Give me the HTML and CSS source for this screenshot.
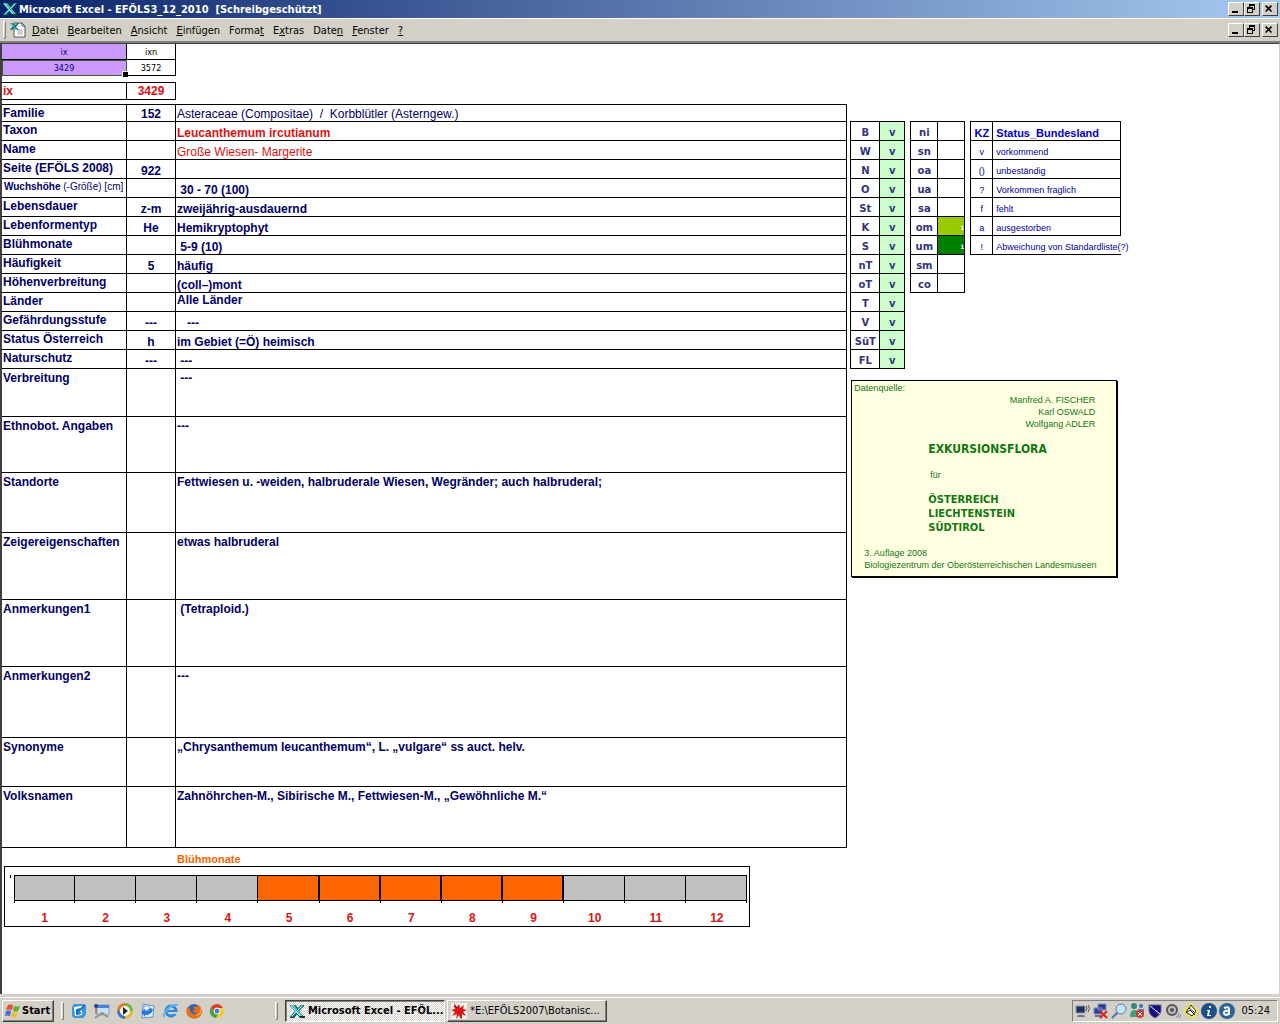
FILE: index.html
```html
<!doctype html>
<html lang="de">

<head>
    <meta charset="utf-8">
    <title>Microsoft Excel - EFÖLS3_12_2010</title>
    <link rel="stylesheet" href="styles.css">
</head>

<body>
    <!-- shared icons -->
    <svg class="defs" width="0" height="0">
        <symbol id="excel" viewBox="0 0 16 16">
            <path d="M1 2h5l3 3 3-3h3v1l-5 5 4 5h2v2h-5l-3-4-3 4H1v-1l5-6-5-5z" fill="#063b3f" />
            <path d="M1 2h4l9 11h-4z" fill="#4cc4c4" />
            <path d="M12 2h3L4 14H1z" fill="#1c9a9a" />
            <path d="M2 3l9 10M13 3L3 13" stroke="#b5f0ee" stroke-width="1" />
        </symbol>
        <symbol id="min" viewBox="0 0 12 10">
            <path d="M3 7h6v2H3z" />
        </symbol>
        <symbol id="restore" viewBox="0 0 12 10">
            <path d="M4 0h6v6H8V5h1V2H5v1H4zM2 3h6v6H2zM3 5v3h4V5z" fill-rule="evenodd" />
        </symbol>
        <symbol id="close" viewBox="0 0 14 12">
            <path d="M3 2l7 7M10 2L3 9" stroke="black" stroke-width="2" />
        </symbol>
    </svg>

    <header class="titlebar">
        <svg class="icon"><use href="#excel" /></svg>
        <h1>Microsoft Excel - EFÖLS3_12_2010&nbsp; [Schreibgeschützt]</h1>
        <div class="winbuttons">
            <button aria-label="Minimieren"><svg><use href="#min" /></svg></button>
            <button aria-label="Wiederherstellen"><svg><use href="#restore" /></svg></button>
            <button class="close" aria-label="Schließen"><svg><use href="#close" /></svg></button>
        </div>
    </header>

    <nav class="menubar">
        <span class="grip"></span>
        <svg class="icon" viewBox="0 0 16 16">
            <path d="M4 1h8l3 3v11H4z" fill="#fff" stroke="#555" />
            <path d="M12 1v3h3" fill="none" stroke="#555" />
            <path d="M7 8h6M7 10h6M7 12h6M9 7v6M11 7v6" stroke="#bbb" />
            <path d="M0 1h3l2 2 2-2h2L6 5l3 3H6L4 6 2 8H0l3-4z" fill="#087078" />
            <path d="M1 1l6 7" stroke="#5cd0d0" />
        </svg>
        <div class="menus">
            <button><u>D</u>atei</button>
            <button><u>B</u>earbeiten</button>
            <button><u>A</u>nsicht</button>
            <button><u>E</u>infügen</button>
            <button>Forma<u>t</u></button>
            <button>E<u>x</u>tras</button>
            <button>Date<u>n</u></button>
            <button><u>F</u>enster</button>
            <button><u>?</u></button>
        </div>
        <div class="winbuttons">
            <button aria-label="Mappe minimieren"><svg><use href="#min" /></svg></button>
            <button aria-label="Mappe wiederherstellen"><svg><use href="#restore" /></svg></button>
            <button class="close" aria-label="Mappe schließen"><svg><use href="#close" /></svg></button>
        </div>
    </nav>

    <main class="sheet">
        <section class="record">
            <table class="index">
                <tr>
                    <th class="violet">ix</th>
                    <th>ixn</th>
                </tr>
                <tr>
                    <td class="violet selected">3429</td>
                    <td>3572</td>
                </tr>
            </table>

            <table class="index current">
                <tr>
                    <th>ix</th>
                    <td>3429</td>
                </tr>
            </table>

            <table class="taxon">
                <colgroup>
                    <col class="col-label">
                    <col class="col-code">
                    <col>
                </colgroup>
                <tr class="first"><th>Familie</th><td>152</td><td class="light">Asteraceae (Compositae)&nbsp; /&nbsp; Korbblütler (Asterngew.)</td></tr>
                <tr><th>Taxon</th><td></td><td class="red">Leucanthemum ircutianum</td></tr>
                <tr><th>Name</th><td></td><td class="light red">Große Wiesen- Margerite</td></tr>
                <tr><th>Seite (EFÖLS 2008)</th><td>922</td><td></td></tr>
                <tr><th class="small"><b>Wuchshöhe</b> (-Größe) [cm]</th><td></td><td>&nbsp;30 - 70 (100)</td></tr>
                <tr><th>Lebensdauer</th><td>z-m</td><td>zweijährig-ausdauernd</td></tr>
                <tr><th>Lebenformentyp</th><td>He</td><td>Hemikryptophyt</td></tr>
                <tr><th>Blühmonate</th><td></td><td>&nbsp;5-9 (10)</td></tr>
                <tr><th>Häufigkeit</th><td>5</td><td>häufig</td></tr>
                <tr><th>Höhenverbreitung</th><td></td><td>(coll–)mont</td></tr>
                <tr><th>Länder</th><td></td><td class="top">Alle Länder</td></tr>
                <tr><th>Gefährdungsstufe</th><td>---</td><td>&nbsp;&nbsp; ---</td></tr>
                <tr><th>Status Österreich</th><td>h</td><td>im Gebiet (=Ö) heimisch</td></tr>
                <tr><th>Naturschutz</th><td>---</td><td>&nbsp;---</td></tr>
                <tr class="memo h48"><th>Verbreitung</th><td></td><td>&nbsp;---</td></tr>
                <tr class="memo h56"><th>Ethnobot. Angaben</th><td></td><td>---</td></tr>
                <tr class="memo h60"><th>Standorte</th><td></td><td>Fettwiesen u. -weiden, halbruderale Wiesen, Wegränder; auch halbruderal;</td></tr>
                <tr class="memo h67"><th>Zeigereigenschaften</th><td></td><td>etwas halbruderal</td></tr>
                <tr class="memo h67"><th>Anmerkungen1</th><td></td><td>&nbsp;(Tetraploid.)</td></tr>
                <tr class="memo h71"><th>Anmerkungen2</th><td></td><td>---</td></tr>
                <tr class="memo h49"><th>Synonyme</th><td></td><td>„Chrysanthemum leucanthemum“, L. „vulgare“ ss auct. helv.</td></tr>
                <tr class="memo h61"><th>Volksnamen</th><td></td><td>Zahnöhrchen-M., Sibirische M., Fettwiesen-M., „Gewöhnliche M.“</td></tr>
            </table>

            <h2>Blühmonate</h2>
            <div class="chart">
                <ol class="months">
                    <li>1</li>
                    <li>2</li>
                    <li>3</li>
                    <li>4</li>
                    <li class="bloom">5</li>
                    <li class="bloom">6</li>
                    <li class="bloom">7</li>
                    <li class="bloom">8</li>
                    <li class="bloom">9</li>
                    <li>10</li>
                    <li>11</li>
                    <li>12</li>
                </ol>
            </div>
        </section>

        <aside class="side">
            <div class="keys">
                <table class="key lands">
                    <tr><th>B</th><td>v</td></tr>
                    <tr><th>W</th><td>v</td></tr>
                    <tr><th>N</th><td>v</td></tr>
                    <tr><th>O</th><td>v</td></tr>
                    <tr><th>St</th><td>v</td></tr>
                    <tr><th>K</th><td>v</td></tr>
                    <tr><th>S</th><td>v</td></tr>
                    <tr><th>nT</th><td>v</td></tr>
                    <tr><th>oT</th><td>v</td></tr>
                    <tr><th>T</th><td>v</td></tr>
                    <tr><th>V</th><td>v</td></tr>
                    <tr><th>SüT</th><td>v</td></tr>
                    <tr><th>FL</th><td>v</td></tr>
                </table>

                <table class="key levels">
                    <tr><th>ni</th><td></td></tr>
                    <tr><th>sn</th><td></td></tr>
                    <tr><th>oa</th><td></td></tr>
                    <tr><th>ua</th><td></td></tr>
                    <tr><th>sa</th><td></td></tr>
                    <tr><th>om</th><td class="lime">1</td></tr>
                    <tr><th>um</th><td class="green">1</td></tr>
                    <tr><th>sm</th><td></td></tr>
                    <tr><th>co</th><td></td></tr>
                </table>

                <table class="key status">
                    <tr><th>KZ</th><th>Status_Bundesland</th></tr>
                    <tr><td>v</td><td>vorkommend</td></tr>
                    <tr><td>()</td><td>unbeständig</td></tr>
                    <tr><td>?</td><td>Vorkommen fraglich</td></tr>
                    <tr><td>f</td><td>fehlt</td></tr>
                    <tr><td>a</td><td>ausgestorben</td></tr>
                    <tr><td>!</td><td class="open">Abweichung von Standardliste(?)</td></tr>
                </table>
            </div>

            <div class="source">
                <p>Datenquelle:</p>
                <p class="authors">Manfred A. FISCHER<br>Karl OSWALD<br>Wolfgang ADLER</p>
                <p class="book">EXKURSIONSFLORA</p>
                <p class="for">für</p>
                <p class="regions">ÖSTERREICH<br>LIECHTENSTEIN<br>SÜDTIROL</p>
                <p class="edition">3. Auflage 2008<br>Biologiezentrum der Oberösterreichischen Landesmuseen</p>
            </div>
        </aside>
    </main>

    <footer class="taskbar">
        <button class="start">
            <svg class="icon" viewBox="0 0 16 16">
                <path d="M3 2q3-1 5 0L7 7Q4 6 1 7z" fill="#e8502a" />
                <path d="M9 3q3 1 6 0l-2 5q-2 1-5 0z" fill="#5cae2c" />
                <path d="M1 8q3-1 5 0l-1 5q-3-1-5 0z" fill="#3a6ed8" />
                <path d="M7 9q3 1 6 0l-2 5q-2 1-5 0z" fill="#f2bc22" />
            </svg>
            Start
        </button>
        <span class="grip"></span>
        <div class="quick">
            <svg class="icon" viewBox="0 0 16 16">
                <path d="M3 1h10l2 2v9l-3 3H3l-2-2V4z" fill="#3a98dc" />
                <path d="M3 4l8-1v9l-7 1z" fill="#fff" />
                <path d="M9 6L6 7v4l4-1M14 2L7 9" fill="none" stroke="#1676c2" stroke-width="2" />
            </svg>
            <svg class="icon" viewBox="0 0 16 16">
                <path d="M3 2h12v10H3z" fill="#c8e2f5" stroke="#7da5c8" />
                <path d="M3 2h12v3H3z" fill="#4a7fd8" />
                <path d="M1 15l7-5 6 4" fill="none" stroke="#9b8d7c" stroke-width="2" />
                <circle cx="2" cy="3" r="2" fill="#283c8c" />
                <path d="M2 5v6" stroke="#b03030" />
            </svg>
            <svg class="icon" viewBox="0 0 16 16">
                <path d="M8 8V0a8 8 0 0 1 8 8z" fill="#6fb63a" />
                <path d="M8 8h8a8 8 0 0 1-8 8z" fill="#f0b428" />
                <path d="M8 8v8a8 8 0 0 1-8-8z" fill="#3873c8" />
                <path d="M8 8H0a8 8 0 0 1 8-8z" fill="#e8762c" />
                <circle cx="8" cy="8" r="5" fill="#fff" />
                <path d="M6 4l5 4-5 4z" fill="#222" />
            </svg>
            <svg class="icon" viewBox="0 0 16 16">
                <path d="M3 1l11 2-1 11-11 1z" fill="#dcecfa" stroke="#5b94cf" />
                <path d="M4 3h5v4H4z" fill="#fff" stroke="#7da5c8" />
                <path d="M1 9l4-3v2q4 0 5-3l3 1q-1 6-8 6v2z" fill="#2878d4" />
            </svg>
            <svg class="icon" viewBox="0 0 16 16">
                <circle cx="8" cy="8" r="5" fill="none" stroke="#2a8ad8" stroke-width="3" />
                <path d="M4 8h9" stroke="#2a8ad8" stroke-width="2" />
                <path d="M10 10h5" stroke="#d4d0c8" stroke-width="2" />
                <path d="M1 14Q0 11 5 6t10-4" fill="none" stroke="#58b4ee" stroke-width="2" />
            </svg>
            <svg class="icon" viewBox="0 0 16 16">
                <circle cx="8" cy="8" r="7" fill="#3a62b0" />
                <path d="M8 1q3 0 4 3-4-1-5 1l2 1-2 2q1 3 4 1-1 3-4 2-3-1-3-5L1 4q-3 10 7 12 8-1 8-8-1-5-4-6z" fill="#e2701c" />
                <path d="M14 4q2 7-5 9 6 0 6-6z" fill="#f8c040" />
            </svg>
            <svg class="icon" viewBox="0 0 16 16">
                <circle cx="8" cy="8" r="7" fill="#f4cc30" />
                <path d="M2 4a7 7 0 0 1 12 1H8L5 10z" fill="#dc4034" />
                <path d="M2 4l3 6 4 1-2 4A7 7 0 0 1 2 4z" fill="#3da14c" />
                <circle cx="8" cy="8" r="3" fill="#4080dc" stroke="#fff" />
            </svg>
        </div>
        <span class="grip"></span>
        <div class="tasks">
            <button class="task active">
                <svg class="icon"><use href="#excel" /></svg>
                Microsoft Excel - EFÖL...
            </button>
            <button class="task">
                <svg class="icon" viewBox="0 0 16 16">
                    <path d="M0 0h16v16H0z" fill="#f7eeee" />
                    <path d="M3 0l3 4 2-3 1 4 4-3-1 4 4 1-4 2 3 4-4-2v5l-2-1-1-3-3 4 1-5-5 2 3-4-4-2 4-1z" fill="#e01414" />
                    <path d="M3 3l3 2M12 10l2 2" stroke="#400" />
                </svg>
                *E:\EFÖLS2007\Botanisc...
            </button>
        </div>

        <div class="tray">
            <svg class="icon" viewBox="0 0 16 16">
                <path d="M1 3h9v7H1z" fill="#20305c" stroke="#8898b8" />
                <path d="M3 12h6l1 2H2z" fill="#68748c" />
                <path d="M11 3q2 2 0 5M13 2q3 3 0 7" fill="none" stroke="#555" />
            </svg>
            <svg class="icon" viewBox="0 0 16 16">
                <path d="M5 1h8v6H5zM1 5h8v6H1z" fill="#24409c" stroke="#8090b8" />
                <path d="M2 13h7" stroke="#68748c" stroke-width="2" />
                <path d="M7 8l7 7M14 8l-7 7" stroke="#dc2020" stroke-width="2" />
            </svg>
            <svg class="icon" viewBox="0 0 16 16">
                <path d="M1 15l6-6" stroke="#4a70b0" stroke-width="2" />
                <circle cx="10" cy="6" r="5" fill="#c4e4fa" stroke="#5480b8" />
            </svg>
            <svg class="icon" viewBox="0 0 16 16">
                <circle cx="5" cy="3" r="3" fill="#2c8c70" />
                <circle cx="12" cy="3" r="2" fill="#3c74b8" />
                <path d="M1 14q0-8 5-7 5 0 5 7z" fill="#3ca07c" />
                <path d="M9 6h6v4H9z" fill="#4a88c0" />
                <circle cx="11" cy="11" r="4" fill="#d83428" />
                <path d="M9 9l4 4M13 9l-4 4" stroke="#fff" />
            </svg>
            <svg class="icon" viewBox="0 0 16 16">
                <path d="M2 2h12v6q0 4-6 7-6-3-6-7z" fill="#10108c" stroke="#667" />
                <path d="M3 3l10 8" stroke="#fff" />
            </svg>
            <svg class="icon" viewBox="0 0 16 16">
                <circle cx="7" cy="7" r="5" fill="#bbb" stroke="#555" stroke-width="2" />
                <circle cx="7" cy="7" r="2" fill="#555" />
                <path d="M11 14q3-1 3-4M13 15q3-1 3-4" fill="none" stroke="#7080d0" />
            </svg>
            <svg class="icon" viewBox="0 0 16 16">
                <path d="M7 0l9 8-6 8-10-7z" fill="#f4ec30" />
                <path d="M3 9l5-7 5 6-4 5z" fill="#fff" stroke="#222" />
                <path d="M3 10l4-3 5 5M6 5l5 4" fill="none" stroke="#222" />
            </svg>
            <svg class="icon" viewBox="0 0 16 16">
                <circle cx="8" cy="8" r="8" fill="#1c5088" />
                <path d="M8 3h2v2H8zM6 7h3l-1 5h2v1H6l1-5H6z" fill="#fff" />
            </svg>
            <svg class="icon" viewBox="0 0 16 16">
                <circle cx="8" cy="8" r="8" fill="#2c6498" />
                <path d="M5 5q5-2 5 1v6M10 8Q5 7 5 10t5 1" fill="none" stroke="#fff" stroke-width="2" />
            </svg>
            <time>05:24</time>
        </div>
    </footer>
</body>

</html>
```
FILE: styles.css
```css
* {
    box-sizing: border-box;
}

body {
    margin: 0;
    min-height: 100vh;
    display: flex;
    flex-direction: column;
    background-color: #d4d0c8;
    font-family: "DejaVu Sans Condensed", "DejaVu Sans", sans-serif;
    font-stretch: condensed;
    font-size: 11px;
}

h1, h2, p, ol {
    margin: 0;
    padding: 0;
}

button {
    font: inherit;
    color: black;
}

.defs {
    position: absolute;
}

.icon {
    width: 16px;
    height: 16px;
    flex: none;
}

/* title and menu */
.titlebar {
    display: flex;
    align-items: center;
    height: 18px;
    padding: 0 2px;
    background: linear-gradient(to right, #0a246a, #a6caf0);
    color: white;
}

.titlebar h1 {
    margin-left: 1px;
    font-size: 11px;
    white-space: nowrap;
}

.menubar {
    display: flex;
    align-items: center;
    height: 25px;
    padding: 0 2px;
    border-top: 1px solid white;
    border-bottom: 2px solid #808080;
}

.grip {
    width: 3px;
    height: 18px;
    border: 1px solid;
    border-color: white #808080 #808080 white;
}

.menubar .grip {
    margin: 0 4px 0 1px;
}

.menus {
    display: flex;
    margin-left: 2px;
}

.menus button {
    padding: 0 5px 0 4px;
    border: 0;
    background: none;
}

.winbuttons {
    display: flex;
    margin-left: auto;
}

.winbuttons button {
    width: 16px;
    height: 14px;
    padding: 0;
    border: 1px solid;
    border-color: white #404040 #404040 white;
    background-color: #d4d0c8;
}

.winbuttons svg {
    display: block;
    width: 12px;
    height: 10px;
}

.winbuttons .close {
    margin-left: 2px;
}

/* worksheet */
.sheet {
    flex: 1;
    display: flex;
    align-items: flex-start;
    border-top: 1px solid #404040;
    border-left: 2px solid #404040;
    border-right: 1px solid #d4d0c8;
    background-color: white;
    font-family: "Liberation Sans", Arial, sans-serif;
    font-stretch: normal;
    color: #000066;
}

.record {
    flex: 0 0 66.2%;
}

table {
    border-collapse: separate;
    border-spacing: 0;
    border-top: 1px solid black;
}

th, td {
    padding: 0 1px;
    border-right: 1px solid black;
    border-bottom: 1px solid black;
    text-align: left;
}

.index {
    table-layout: fixed;
    width: 174px;
    border-top: 0;
    font-family: "DejaVu Sans Condensed", "DejaVu Sans", sans-serif;
    font-stretch: condensed;
    font-size: 9px;
    color: black;
}

.index th, .index td {
    height: 16px;
    font-weight: normal;
    text-align: center;
}

.index th:first-child {
    width: 125px;
}

.index .violet {
    background-color: #cc99ff;
    color: #000080;
}

.selected {
    position: relative;
    outline: 1px solid #445533;
    outline-offset: -1px;
}

/* fill handle */
.selected::after {
    content: "";
    position: absolute;
    right: -2px;
    bottom: -2px;
    width: 5px;
    height: 5px;
    border: solid white;
    border-width: 1px 0 0 1px;
    background-color: black;
}

.current {
    margin: 6px 0 4px;
    border-top: 1px solid black;
    font-family: "Liberation Sans", Arial, sans-serif;
    font-stretch: normal;
    font-size: 12px;
}

.current th, .current td {
    height: 17px;
    font-weight: bold;
    color: #dd1111;
}

.current th {
    text-align: left;
}

.taxon {
    table-layout: fixed;
    width: 100%;
    font-size: 12px;
    font-weight: bold;
    line-height: 14px;
}

.col-label {
    width: 125px;
}

.col-code {
    width: 49px;
}

.taxon th, .taxon td {
    height: 19px;
    white-space: nowrap;
}

.taxon th {
    padding-top: 1px;
    vertical-align: top;
}

.taxon td {
    vertical-align: bottom;
}

.taxon td:nth-child(2) {
    text-align: center;
}

.taxon .first th, .taxon .first td {
    height: 17px;
}

.taxon .light {
    font-weight: normal;
}

.taxon .red {
    color: #dd1111;
}

.taxon .top {
    vertical-align: top;
}

.taxon .small {
    padding-left: 2px;
    font-size: 10px;
    font-weight: normal;
}

.taxon .memo th, .taxon .memo td {
    padding-top: 2px;
    vertical-align: top;
}

.taxon .h48 td { height: 48px; }
.taxon .h49 td { height: 49px; }
.taxon .h56 td { height: 56px; }
.taxon .h60 td { height: 60px; }
.taxon .h61 td { height: 61px; }
.taxon .h67 td { height: 67px; }
.taxon .h71 td { height: 71px; }

/* flowering months */
h2 {
    padding: 5px 0 0 175px;
    font-size: 11px;
    line-height: 13px;
    color: #ee6600;
}

.chart {
    width: 88.3%;
    margin-left: 2px;
    padding: 8px 2px 1px 9px;
    border: 1px solid black;
    background: linear-gradient(black, black) 5px 8px / 1px 3px no-repeat;
}

.months {
    display: grid;
    grid-template-columns: repeat(12, 1fr);
    list-style: none;
    font-size: 12px;
    font-weight: bold;
    line-height: 14px;
    text-align: center;
    color: #dd1111;
}

/* tick below each bar */
.months li {
    background: linear-gradient(black, black) right 24px / 1px 4px no-repeat;
}

.months li:first-child {
    background:
        linear-gradient(black, black) left 24px / 1px 4px no-repeat,
        linear-gradient(black, black) right 24px / 1px 4px no-repeat;
}

.months li::before {
    content: "";
    display: block;
    height: 24px;
    margin-bottom: 10px;
    border: solid black;
    border-width: 1px 1px 1px 0;
    background-color: #c0c0c0;
}

.months li:first-child::before {
    border-left-width: 1px;
}

.months .bloom::before {
    border-right-width: 2px;
    background-color: #ff6600;
}

/* right side */
.side {
    padding: 77px 0 0 3px;
}

.keys {
    display: flex;
    align-items: flex-start;
    gap: 5px;
}

.key {
    table-layout: fixed;
    border-left: 1px solid black;
    font-size: 10px;
    line-height: 12px;
}

.key th, .key td {
    height: 19px;
    padding: 4px 0 0;
    text-align: center;
    white-space: nowrap;
}

.lands, .levels {
    width: 55px;
    font-family: "DejaVu Sans", sans-serif;
    font-weight: bold;
    color: #333380;
}

.lands th {
    width: 29px;
}

.lands td {
    background-color: #ccffcc;
}

.levels th {
    width: 27px;
}

.levels td {
    font-size: 6px;
    text-align: right;
    color: white;
}

.levels .lime {
    background-color: #99cc00;
}

.levels .green {
    background-color: #008000;
}

.status {
    width: 151px;
    font-size: 9px;
    color: #000099;
}

.status th {
    font-size: 11px;
    color: #0000cc;
}

.status th:first-child {
    width: 22px;
}

.status th:last-child, .status td:last-child {
    padding-left: 3px;
    text-align: left;
}

.status .open {
    border-right: 0;
}

.source {
    width: 266px;
    margin: 11px 0 0 1px;
    padding: 1px 2px 5px;
    border: 1px solid black;
    box-shadow: 1px 1px black;
    background-color: #ffffe1;
    font-size: 9px;
    line-height: 12px;
    color: #117711;
}

.authors {
    padding-right: 19px;
    text-align: right;
}

.book, .regions {
    padding-left: 74px;
    font-family: "DejaVu Sans Condensed", "DejaVu Sans", sans-serif;
    font-stretch: condensed;
    font-size: 12px;
    font-weight: bold;
    line-height: 14px;
}

.book {
    margin-top: 12px;
}

.regions {
    font-size: 11px;
}

.for {
    padding: 13px 0 12px 76px;
}

.edition {
    margin-top: 12px;
    padding-left: 10px;
    white-space: nowrap;
}

/* taskbar */
.taskbar {
    display: flex;
    align-items: center;
    gap: 4px;
    height: 30px;
    padding: 4px 2px 2px;
    border-top: 1px solid #d4d0c8;
    box-shadow: inset 0 2px #d4d0c8, inset 0 3px white;
}

.taskbar button {
    display: flex;
    align-items: center;
    gap: 3px;
    height: 22px;
    padding: 0 3px;
    border: 1px solid;
    border-color: white #404040 #404040 white;
    box-shadow: inset -1px -1px #808080;
    background-color: #d4d0c8;
    white-space: nowrap;
}

.taskbar .start {
    width: 52px;
    padding: 0 2px;
    gap: 1px;
    font-weight: bold;
}

.taskbar .grip {
    margin: 0 3px;
}

.quick {
    display: flex;
    gap: 7px;
    margin-right: 43px;
}

.tasks {
    display: grid;
    grid-template-columns: 160px 160px;
    gap: 2px;
}

.taskbar .task {
    overflow: hidden;
}

.taskbar .active {
    border-color: #404040 white white #404040;
    box-shadow: inset 1px 1px #808080;
    background: repeating-conic-gradient(white 0 25%, #d4d0c8 0 50%) 0 0 / 2px 2px;
    font-weight: bold;
}

.tray {
    display: flex;
    align-items: center;
    gap: 2px;
    height: 22px;
    margin-left: auto;
    padding: 0 7px 0 2px;
    border: 1px solid;
    border-color: #808080 white white #808080;
}

.tray time {
    margin-left: 4px;
}
```
